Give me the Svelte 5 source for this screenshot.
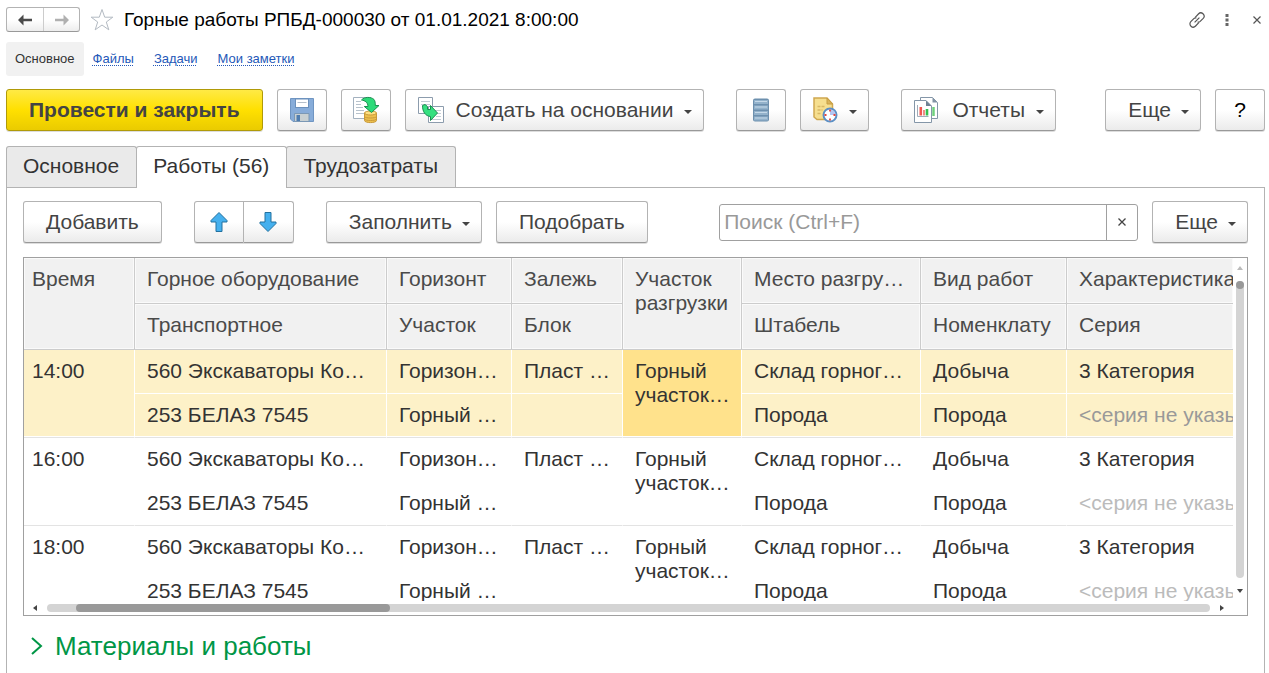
<script>
  let search = $state('');
  let activeTab = $state('works');
  let selected = $state(0);

  const sections = ['Файлы', 'Задачи', 'Мои заметки'];

  const tabs = [
    { id: 'main', label: 'Основное' },
    { id: 'works', label: 'Работы (56)' },
    { id: 'labor', label: 'Трудозатраты' },
  ];

  const rows = ['14:00', '16:00', '18:00'].map((time) => ({
    time,
    equipment: '560 Экскаваторы Ко…',
    transport: '253 БЕЛАЗ 7545',
    horizon: 'Горизон…',
    area: 'Горный …',
    deposit: 'Пласт …',
    unloadArea: ['Горный', 'участок…'],
    unloadPlace: 'Склад горног…',
    stack: 'Порода',
    workType: 'Добыча',
    item: 'Порода',
    feature: '3 Категория',
    series: '<серия не указы',
  }));
</script>

<div class="window">
  <header class="title-bar">
    <div class="history">
      <button aria-label="Назад">
        <svg width="16" height="12" viewBox="0 0 16 12"><path d="M1 6 L6.5 .5 V4.7 H15 V7.3 H6.5 V11.5 Z" fill="#4a4a4a" /></svg>
      </button>
      <button aria-label="Вперед">
        <svg width="16" height="12" viewBox="0 0 16 12"><path d="M15 6 L9.5 .5 V4.7 H1 V7.3 H9.5 V11.5 Z" fill="#b0b0b0" /></svg>
      </button>
    </div>
    <button class="plain star" aria-label="Избранное">
      <svg width="24" height="24" viewBox="0 0 24 24"><path d="M12 1.5 L14.7 9.2 H22.8 L16.3 14 L18.8 21.8 L12 17 L5.2 21.8 L7.7 14 L1.2 9.2 H9.3 Z" fill="#fff" stroke="#b3bac2" /></svg>
    </button>
    <h1>Горные работы РПБД-000030 от 01.01.2021 8:00:00</h1>
    <div class="window-tools">
      <button class="plain" aria-label="Ссылка">
        <svg width="16" height="16" viewBox="0 0 16 16" fill="none" stroke="#555" stroke-width="1.2">
          <path d="M6.2 5.4 L9.4 2 A2.9 2.9 0 0 1 14.2 6.4 L11.2 9.4 A2.9 2.9 0 0 1 8.6 10" />
          <path d="M9.8 10.6 L6.6 14 A2.9 2.9 0 0 1 1.8 9.6 L4.8 6.6 A2.9 2.9 0 0 1 7.4 6" />
          <path d="M5.6 10.4 L10.4 5.6" />
        </svg>
      </button>
      <button class="plain" aria-label="Меню">
        <svg width="16" height="16" viewBox="0 0 16 16" fill="#666"><path d="M6.5 2h3v3h-3zM6.5 6.5h3v3h-3zM6.5 11h3v3h-3z" /></svg>
      </button>
      <button class="plain" aria-label="Закрыть">
        <svg width="16" height="16" viewBox="0 0 16 16"><path d="M4.5 4.5 L11.5 11.5 M11.5 4.5 L4.5 11.5" stroke="#555" stroke-width="1.2" /></svg>
      </button>
    </div>
  </header>

  <nav class="sections">
    <span class="current">Основное</span>
    {#each sections as section}
      <a href="#top">{section}</a>
    {/each}
  </nav>

  <div class="toolbar">
    <button class="btn primary">Провести и закрыть</button>
    <button class="btn icon" aria-label="Записать">
      <svg width="26" height="26" viewBox="0 0 26 26">
        <path d="M1.5 1.5 H24.5 V24.5 H4 L1.5 22 Z" fill="#87acd9" stroke="#6f95c2" />
        <rect x="6.5" y="2" width="13" height="8.5" fill="#fff" stroke="#6b90bb" />
        <path d="M8.5 5.5 H17.5" stroke="#b5bfca" />
        <path d="M5.5 16.5 H20 V24.5 H5.5 Z" fill="#c8d0d2" stroke="#7b98b5" />
        <rect x="7.5" y="18" width="3.5" height="6" fill="#4f7db0" />
      </svg>
    </button>
    <button class="btn icon" aria-label="Провести">
      <svg width="28" height="28" viewBox="0 0 28 28">
        <path d="M1.5 1.5 H18.5 V22.5 H1.5 Z" fill="#fff" stroke="#a3b1bf" />
        <path d="M4 5.5h5M4 8.5h5M4 11.5h7M4 14.5h8M4 17.5h8" stroke="#b7c2cc" />
        <path d="M12.5 17 V24.5 C12.5 27.3 24.5 27.3 24.5 24.5 V17 Z" fill="#edc04d" stroke="#c8993a" />
        <ellipse cx="18.5" cy="17" rx="6" ry="2" fill="#ffe184" stroke="#c8993a" />
        <path d="M12.5 20.5 C13 22.5 24 22.5 24.5 20.5 M12.5 23 C13 25 24 25 24.5 23" fill="none" stroke="#c8993a" />
        <path d="M9.5 4 C12 .8 19 .5 22 3.5 C23.2 5 23.3 7 23.3 9.5 H27 L19.5 16.5 L12.3 10.5 H16 C16 6.5 13 4.5 9.5 4 Z" fill="#2cdb79" stroke="#1a8f50" />
      </svg>
    </button>
    <button class="btn with-icon">
      <svg width="28" height="28" viewBox="0 0 28 28">
        <path d="M1.5 1.5 H15.5 V17.5 H1.5 Z" fill="#fff" stroke="#8c9cad" />
        <path d="M4 5.5h9M4 8.5h9" stroke="#c3ccd5" />
        <path d="M11.5 10.5 H26.5 V26.5 H11.5 Z" fill="#fff" stroke="#8c9cad" />
        <path d="M18 14.5h6M20 17.5h4M19 20.5h5M14 23.5h10" stroke="#c3ccd5" />
        <path d="M5.5 9.5 L8 8.5 L10.5 10.5 V13.5 H13.5 V9.5 L20.5 17 L13.5 24.5 V20.5 C8.5 20 5.5 16 5.5 9.5 Z" fill="#35e080" stroke="#1a8f50" />
      </svg>
      Создать на основании <i class="caret"></i>
    </button>
    <button class="btn icon spaced" aria-label="Журнал">
      <svg width="18" height="26" viewBox="0 0 18 26">
        <rect x="1" y="1.5" width="16" height="23" rx="2" fill="#6d90ae" />
        <path d="M2 5h14M2 10.5h14M2 16h14M2 21.5h14" stroke="#93b2cb" stroke-width="4" />
        <path d="M3 4.5h12M3 10h12M3 15.5h12M3 21h12" stroke="#c4d8e8" />
      </svg>
    </button>
    <button class="btn menu-icon" aria-label="История">
      <svg width="26" height="28" viewBox="0 0 26 28">
        <path d="M2 2 H15 L20.5 8 V23.5 H5 L2 21 Z" fill="#f6df8f" stroke="#d0a850" stroke-width="1.5" />
        <path d="M15 2 V8 H20.5 Z" fill="#d9b45c" stroke="#c79d42" />
        <path d="M5.5 10.5h8M5.5 14h5M5.5 17.5h4" stroke="#d8b865" stroke-width="1.5" stroke-dasharray="3 1" />
        <circle cx="18" cy="19" r="6.5" fill="#fff" stroke="#5c8fc4" stroke-width="2" />
        <path d="M18 19 V13.5 A5.5 5.5 0 0 1 23.5 19 Z" fill="#b4c6f2" />
        <path d="M18 13.5v2M18 22.5v2M12.5 19h2M21.5 19h2" stroke="#e3453e" stroke-width="1.8" />
      </svg>
      <i class="caret"></i>
    </button>
    <button class="btn with-icon spaced">
      <svg width="28" height="28" viewBox="0 0 28 28">
        <path d="M7.5 1.5 H19.5 L24.5 6.5 V22.5 H7.5 Z" fill="#fff" stroke="#8496a8" />
        <path d="M19.5 1.5 V6.5 H24.5 Z" fill="#8294a5" />
        <path d="M20.5 11v9" stroke="#6fd07c" stroke-width="2.5" />
        <path d="M1.5 4.5 H13 L18.5 10 V26.5 H1.5 Z" fill="#fff" stroke="#8496a8" />
        <path d="M13 4.5 V10 H18.5 Z" fill="#6f8294" />
        <path d="M4.5 9v11.5h11" fill="none" stroke="#a0acb8" />
        <path d="M7.8 11v8.500" stroke="#f0564f" stroke-width="2.6" />
        <path d="M11 14v5.5" stroke="#ee8d86" stroke-width="2" />
        <path d="M14 13v6.5" stroke="#35c04f" stroke-width="2.6" />
      </svg>
      Отчеты <i class="caret"></i>
    </button>
    <button class="btn more end">Еще <i class="caret"></i></button>
    <button class="btn icon help">?</button>
  </div>

  <div class="tabs" role="tablist">
    {#each tabs as tab}
      <button role="tab" aria-selected={activeTab === tab.id} class:active={activeTab === tab.id} onclick={() => (activeTab = tab.id)}>{tab.label}</button>
    {/each}
  </div>

  <main class="panel">
    <div class="toolbar">
      <button class="btn">Добавить</button>
      <div class="pair spaced">
        <button class="btn icon" aria-label="Вверх">
          <svg width="20" height="22" viewBox="0 0 20 22"><path d="M10 1.5 L18 9.5 V11 H13 V20.5 H7 V11 H2 V9.5 Z" fill="#45b0ee" stroke="#22719f" stroke-linejoin="round" /></svg>
        </button>
        <button class="btn icon" aria-label="Вниз">
          <svg width="20" height="22" viewBox="0 0 20 22"><path d="M10 20.5 L18 12.5 V11 H13 V1.5 H7 V11 H2 V12.5 Z" fill="#45b0ee" stroke="#22719f" stroke-linejoin="round" /></svg>
        </button>
      </div>
      <button class="btn more spaced">Заполнить <i class="caret"></i></button>
      <button class="btn">Подобрать</button>
      <div class="search end">
        <input type="text" aria-label="Поиск" placeholder="Поиск (Ctrl+F)" bind:value={search} />
        <button aria-label="Очистить" onclick={() => (search = '')}>
          <svg width="10" height="10" viewBox="0 0 10 10"><path d="M1.5 1.5 L8.5 8.5 M8.5 1.5 L1.5 8.5" stroke="#444" stroke-width="1.3" /></svg>
        </button>
      </div>
      <button class="btn more">Еще <i class="caret"></i></button>
    </div>

    <div class="grid">
      <div class="viewport">
        <table>
          <colgroup>
            <col class="w-time" />
            <col class="w-equipment" />
            <col class="w-horizon" />
            <col class="w-deposit" />
            <col class="w-unload" />
            <col class="w-place" />
            <col class="w-type" />
            <col />
          </colgroup>
          <thead>
            <tr>
              <th rowspan="2">Время</th>
              <th>Горное оборудование</th>
              <th>Горизонт</th>
              <th>Залежь</th>
              <th rowspan="2">Участок<br />разгрузки</th>
              <th>Место разгру…</th>
              <th>Вид работ</th>
              <th>Характеристика</th>
            </tr>
            <tr>
              <th>Транспортное</th>
              <th>Участок</th>
              <th>Блок</th>
              <th>Штабель</th>
              <th>Номенклату</th>
              <th>Серия</th>
            </tr>
          </thead>
          {#each rows as row, i}
            <tbody class:selected={selected === i} onclick={() => (selected = i)}>
              <tr>
                <td rowspan="2">{row.time}</td>
                <td>{row.equipment}</td>
                <td>{row.horizon}</td>
                <td>{row.deposit}</td>
                <td rowspan="2" class="focus">{row.unloadArea[0]}<br />{row.unloadArea[1]}</td>
                <td>{row.unloadPlace}</td>
                <td>{row.workType}</td>
                <td>{row.feature}</td>
              </tr>
              <tr>
                <td>{row.transport}</td>
                <td>{row.area}</td>
                <td></td>
                <td>{row.stack}</td>
                <td>{row.item}</td>
                <td class="empty">{row.series}</td>
              </tr>
            </tbody>
          {/each}
        </table>
      </div>
      <div class="vscroll">
        <i class="arrow up"></i>
        <div class="track"><div class="thumb"></div></div>
        <i class="arrow down"></i>
      </div>
      <div class="hscroll">
        <i class="arrow left"></i>
        <div class="track"><div class="thumb"></div></div>
        <i class="arrow right"></i>
      </div>
    </div>

    <button class="plain group">
      <svg width="12" height="20" viewBox="0 0 12 20"><path d="M1 2 L10 10 L1 18" fill="none" stroke="#009646" stroke-width="2" /></svg>
      Материалы и работы
    </button>
  </main>
</div>

<style>
  :global(body) { background: #fff; }
  .window {
    min-height: 100vh; box-sizing: border-box; padding: 0 4px 0 6px;
    display: flex; flex-direction: column;
    font-family: "Liberation Sans", Arial, sans-serif; font-size: 21px; line-height: 24px; color: #333;
  }
  button, input { font: inherit; color: inherit; box-sizing: border-box; }
  button { padding: 0; cursor: pointer; }
  svg { display: block; flex-shrink: 0; }
  .plain { border: none; background: none; }

  .title-bar { display: flex; align-items: center; height: 39px; }
  .history { display: flex; border: 1px solid #b3b3b3; border-bottom-color: #999; border-radius: 3px; background: linear-gradient(#fff 50%, #ededed); }
  .history button { width: 36px; height: 23px; display: grid; place-items: center; border: none; background: none; }
  .history button + button { border-left: 1px solid #ccc; }
  .star { margin: 0 10px 0 10px; }
  h1 { margin: 0; font-size: 19px; font-weight: 400; color: #000; }
  .window-tools { display: flex; gap: 14px; margin: 0 0 0 auto; }

  .sections { display: flex; align-items: center; gap: 20px; height: 34px; margin: 3px 0 13px; font-size: 13px; line-height: 16px; }
  .current { margin-right: -11px; padding: 9px; border-radius: 3px; background: #f1f1f1; }
  .sections a { color: #2458b8; text-decoration: underline dotted 1px; text-underline-offset: 2px; }

  .toolbar { display: flex; align-items: center; gap: 14px; }
  .btn {
    height: 42px; padding: 0 22px; display: flex; align-items: center; justify-content: center; white-space: nowrap;
    border: 1px solid #b3b3b3; border-bottom-color: #999; border-radius: 3px;
    background: linear-gradient(#fff 50%, #ebebeb); box-shadow: 0 1px #ddd; color: #444;
  }
  .btn.primary { border-color: #b09a08; background: linear-gradient(#ffea45, #ffe000 50%, #eacb00); font-weight: 700; }
  .btn.icon { width: 50px; padding: 0; }
  .btn.with-icon { padding: 0 11px; gap: 11px; }
  .btn.menu-icon { padding: 0 11px; gap: 11px; }
  .btn.more { padding: 0 11px 0 22px; gap: 10px; }
  .btn.help { color: #000; }
  .spaced { margin-left: 18px; }
  .end { margin-left: auto; }
  .caret { margin-top: 4px; border: 4px solid transparent; border-top-color: #444; border-bottom: none; }
  .pair { display: flex; }
  .pair .btn:first-child { border-radius: 3px 0 0 3px; }
  .pair .btn + .btn { border-left: none; border-radius: 0 3px 3px 0; }

  .tabs { display: flex; margin-top: 15px; position: relative; z-index: 1; }
  .tabs button {
    height: 41px; padding: 0 17px 2px 16px; border: 1px solid #b3b3b3; border-bottom: none;
    border-radius: 3px 3px 0 0; background: #eaeaea;
  }
  .tabs button + button { margin-left: -1px; }
  .tabs .active { height: 42px; padding-bottom: 3px; margin-bottom: -1px; background: #fff; }

  .panel { flex: 1; border: 1px solid #b3b3b3; border-bottom: none; padding: 13px 16px 0; }
  .search { flex: 0 1 419px; min-width: 0; height: 37px; display: flex; box-sizing: border-box; border: 1px solid #a0a0a0; border-radius: 3px; }
  .search input { flex: 1; min-width: 0; padding: 0 4px; border: none; outline: none; background: none; }
  .search input::placeholder { color: #999; opacity: 1; }
  .search button { width: 31px; display: grid; place-items: center; border: none; border-left: 1px solid #a0a0a0; background: none; }

  .grid { margin-top: 14px; border: 1px solid #a0a0a0; display: grid; grid-template-columns: minmax(0, 1fr) 14px; grid-template-rows: 343px 14px; }
  .viewport { overflow: hidden; }
  table { width: 100%; table-layout: fixed; border-collapse: separate; border-spacing: 0; }
  .w-time { width: 111px; }
  .w-equipment { width: 252px; }
  .w-horizon { width: 125px; }
  .w-deposit { width: 111px; }
  .w-unload { width: 119px; }
  .w-place { width: 179px; }
  .w-type { width: 146px; }
  th, td { box-sizing: border-box; padding: 9px 0 0 12px; overflow: hidden; white-space: nowrap; text-align: left; vertical-align: top; font-weight: 400; }
  th { height: 46px; border-right: 1px solid #ccc; border-bottom: 1px solid #ccc; background: #f1f1f1; box-shadow: inset 0 0 0 1px #fafafa; color: #4a4a4a; }
  td { height: 44px; border-right: 1px solid transparent; }
  th:last-child, td:last-child { border-right: none; }
  tr:first-child > :first-child { padding-left: 8px; }
  tr:first-child td:not([rowspan]) { border-bottom: 1px solid transparent; }
  tr:last-child td, td[rowspan] { border-bottom: 1px solid #e3e3e3; }
  .selected td { background: #fdf1c8; border-right-color: #fff; }
  .selected tr:first-child td:not([rowspan]) { border-bottom-color: #fff; }
  .selected tr:last-child td, .selected td[rowspan] { box-shadow: inset 0 -1px #fff; }
  .selected .focus { background: #ffe28c; }
  .empty { color: #bbb; }
  .selected .empty { color: #999; }

  .vscroll { grid-row: 1 / 3; grid-column: 2; display: flex; flex-direction: column; align-items: center; padding: 8px 0 22px; }
  .vscroll .track { flex: 1; width: 8px; margin: 11px 0; }
  .vscroll .thumb { height: 8px; }
  .hscroll { grid-row: 2; grid-column: 1; display: flex; align-items: center; padding: 0 9px; }
  .hscroll .track { flex: 1; height: 8px; margin: 0 10px; }
  .hscroll .thumb { width: 27%; height: 8px; margin-left: 29px; }
  .track { border-radius: 4px; background: #d4d4d4; }
  .thumb { border-radius: 4px; background: #999; }
  .arrow { border: 3px solid transparent; }
  .up { border-top: none; border-bottom: 4px solid #bbb; }
  .down { border-bottom: none; border-top: 4px solid #444; }
  .left { border-left: none; border-right: 4px solid #444; }
  .right { border-right: none; border-left: 4px solid #444; }

  .group { display: flex; align-items: center; gap: 12px; margin: 14px 0 0 8px; font-size: 26px; line-height: 32px; color: #009646; }
</style>
